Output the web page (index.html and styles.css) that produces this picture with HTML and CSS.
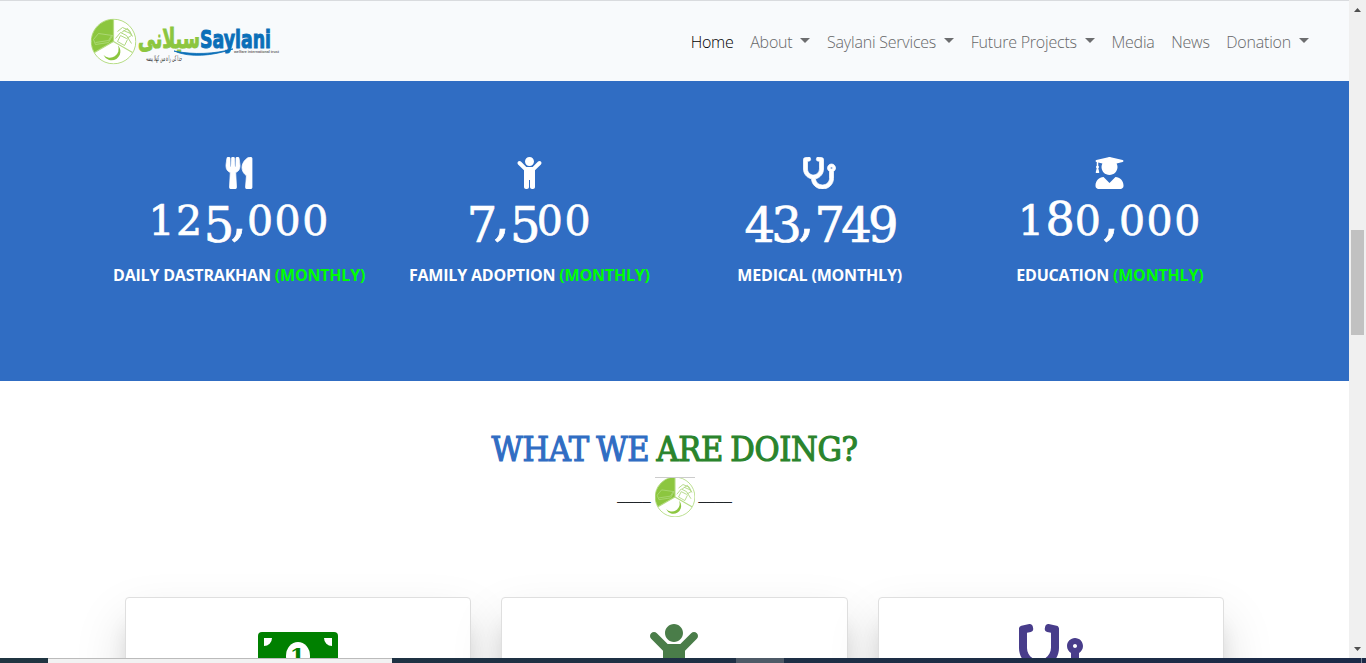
FILE: index.html
```html
<!DOCTYPE html>
<html lang="en">
<head>
<meta charset="utf-8">
<title>Saylani</title>
<link rel="stylesheet" href="styles.css">
</head>
<body>
<svg width="0" height="0" class="defs">
  <symbol id="emblem" viewBox="0 0 46 46">
    <circle cx="23" cy="23" r="22.300" fill="#fff" stroke="#b5dc84" stroke-width="1"/>
    <path d="M23 23V1A22 22 0 0 0 4 34Z" fill="#8cc63f"/>
    <path d="M23 1V23L4 34M23 23L42 34" fill="none" stroke="#b5dc84" stroke-width="1.200"/>
    <path d="M3 21L8 15L22 17L18 24L5 26Z M5 24L18 22L21 17" fill="none" stroke="#b2dc80" stroke-width=".8"/>
    <path d="M25 20L30 14L36 17L41 25M27 13L32 9L39 12L42 18M31 14L37 10L41 17L36 20L30 17L27 23L34 27L37 21M33 12L40 15" fill="none" stroke="#b0d881" stroke-width="1"/>
    <path d="M27.500 27A8.800 8.800 0 1 1 13 36.500A8.800 8.800 0 0 0 27.500 27Z" fill="#8cc63f"/>
  </symbol>
  <symbol id="utensils" viewBox="0 0 416 512"><path d="M207.900 15.200c.8 4.700 16.100 94.500 16.100 128.800 0 52.300-27.800 89.600-68.900 104.600L168 486.700c.7 13.700-10.200 25.300-24 25.300H80c-13.700 0-24.700-11.500-24-25.300l12.900-238.100C27.700 233.600 0 196.200 0 144 0 109.600 15.300 19.900 16.100 15.200 19.300-5.100 61.400-5.400 64 16.300v141.200c1.300 3.400 15.100 3.200 16 0 1.400-25.300 7.900-139.200 8-141.800 3.300-20.800 44.700-20.800 47.900 0 .2 2.700 6.600 116.500 8 141.800.9 3.200 14.800 3.400 16 0V16.300c2.600-21.600 44.800-21.400 47.900-1.100zm119.200 285.700l-15 185.100c-1.200 14 9.900 26 23.900 26h56c13.300 0 24-10.700 24-24V24c0-13.200-10.700-24-24-24-82.500 0-221.400 178.500-64.900 300.900z"/></symbol>
  <symbol id="child" viewBox="0 0 384 512"><path d="M120 72c0-39.765 32.235-72 72-72s72 32.235 72 72c0 39.764-32.235 72-72 72s-72-32.236-72-72zm254.627 1.373c-12.496-12.497-32.758-12.497-45.254 0L242.745 160H141.254L54.627 73.373c-12.496-12.497-32.758-12.497-45.254 0-12.497 12.497-12.497 32.758 0 45.255L104 213.254V480c0 17.673 14.327 32 32 32h16c17.673 0 32-14.327 32-32V368h16v112c0 17.673 14.327 32 32 32h16c17.673 0 32-14.327 32-32V213.254l94.627-94.627c12.497-12.497 12.497-32.757 0-45.254z"/></symbol>
  <symbol id="stethoscope" viewBox="0 0 512 512"><path d="M447.100 112c-34.200.5-62.300 28.400-63 62.600-.5 24.300 12.500 45.600 32 56.800V344c0 57.300-50.200 104-112 104-60 0-109.200-44.100-111.900-99.200C265 333.800 320 269.200 320 192V36.600c0-11.400-8.100-21.300-19.300-23.500L237.800.5c-13-2.600-25.600 5.800-28.200 18.800L206.400 35c-2.600 13 5.800 25.600 18.800 28.200l30.700 6.100v121.400c0 52.900-42.200 96.700-95.100 97.200-53.400.5-96.900-42.700-96.900-96V69.400l30.700-6.100c13-2.600 21.400-15.200 18.800-28.200l-3.100-15.700C107.700 6.400 95.100-2 82.100.6L19.300 13C8.100 15.300 0 25.100 0 36.600V192c0 77.300 55.100 142 128.100 156.800C130.700 439.200 208.600 512 304 512c97 0 176-75.400 176-168V231.400c19.100-11.100 32-31.700 32-55.400 0-35.700-29.200-64.500-64.900-64zm.9 80c-8.800 0-16-7.200-16-16s7.200-16 16-16 16 7.200 16 16-7.200 16-16 16z"/></symbol>
  <symbol id="graduate" viewBox="0 0 448 512"><path d="M319.400 320.600L224 416l-95.400-95.400C57.100 323.700 0 382.200 0 454.400v9.600c0 26.500 21.500 48 48 48h352c26.500 0 48-21.500 48-48v-9.600c0-72.200-57.100-130.700-128.600-133.800zM13.600 79.800l6.400 1.500v58.400c-7 4.200-12 11.500-12 20.300 0 8.400 4.600 15.400 11.100 19.700L3.500 242c-1.700 6.900 2.100 14 7.600 14h41.800c5.500 0 9.300-7.100 7.600-14l-15.600-62.300C51.400 175.400 56 168.400 56 160c0-8.800-5-16.100-12-20.300V87.100l66 15.900c-8.600 17.200-14 36.400-14 57 0 70.700 57.300 128 128 128s128-57.300 128-128c0-20.600-5.300-39.800-14-57l96.300-23.200c18.200-4.400 18.200-27.100 0-31.500l-190.400-46c-13-3.100-26.700-3.100-39.700 0L13.600 48.200c-18.100 4.400-18.100 27.200 0 31.600z"/></symbol>
</svg>
<div class="browser">
  <div class="viewport">
    <div class="page">
      <header class="navbar">
        <svg class="brand" width="192" height="50" viewBox="89 16 192 50" role="img" aria-label="Saylani">
          <use href="#emblem" x="90.500" y="18.500" width="46" height="46"/>
          <text class="brand-ar" x="200" y="48" textLength="62" lengthAdjust="spacingAndGlyphs">سيلانى</text>
          <path d="M174 51C190 58 212 56 233 49C214 54 194 55 174 51Z" fill="#0b6fb8" stroke="#0b6fb8" stroke-width=".8"/>
          <text class="brand-en" x="200" y="48" textLength="71" lengthAdjust="spacingAndGlyphs">Saylani</text>
          <text class="brand-sub" x="234" y="52.500" textLength="45" lengthAdjust="spacingAndGlyphs">welfare international trust</text>
          <text class="brand-urdu" x="182" y="61" textLength="36" lengthAdjust="spacingAndGlyphs">خدا کی راہ میں کھلا پیسہ</text>
        </svg>
        <nav class="links">
          <a class="link active">Home</a>
          <a class="link drop">About</a>
          <a class="link drop">Saylani Services</a>
          <a class="link drop">Future Projects</a>
          <a class="link">Media</a>
          <a class="link">News</a>
          <a class="link drop">Donation</a>
        </nav>
      </header>
      <section class="stats">
        <div class="stat">
          <svg class="stat-icon heavy" width="28" height="32"><use href="#utensils"/></svg>
          <p class="count">12<span class="low">5</span><span class="comma">,</span>000</p>
          <p class="label">DAILY DASTRAKHAN <span class="lime">(MONTHLY)</span></p>
        </div>
        <div class="stat">
          <svg class="stat-icon" width="25" height="32"><use href="#child"/></svg>
          <p class="count"><span class="low">7</span><span class="comma">,</span><span class="low">5</span>00</p>
          <p class="label">FAMILY ADOPTION <span class="lime">(MONTHLY)</span></p>
        </div>
        <div class="stat">
          <svg class="stat-icon heavy" width="33" height="32"><use href="#stethoscope"/></svg>
          <p class="count"><span class="low">43</span><span class="comma">,</span><span class="low">749</span></p>
          <p class="label">MEDICAL (MONTHLY)</p>
        </div>
        <div class="stat">
          <svg class="stat-icon" width="29" height="32"><use href="#graduate"/></svg>
          <p class="count">1<span class="high">8</span>0<span class="comma">,</span>000</p>
          <p class="label">EDUCATION <span class="lime">(MONTHLY)</span></p>
        </div>
      </section>
      <section class="work">
        <h2 class="title">WHAT WE <span class="green">ARE DOING?</span></h2>
        <div class="divider"><span>____</span><svg width="40" height="40" viewBox="0 0 40 40"><use href="#emblem" x="-.5" y="-.5" width="41" height="41"/><path d="M0 .5H40" stroke="#ccc"/></svg><span>____</span></div>
        <div class="cards">
          <article class="card">
            <svg width="80" height="64" viewBox="0 0 640 512">
              <rect y="64" width="640" height="384" rx="32" fill="#008000"/>
              <path d="M48 112h64a64 64 0 0 1-64 64zM592 112h-64a64 64 0 0 0 64 64z" fill="#fff"/>
              <ellipse cx="320" cy="256" rx="96" ry="112" fill="#fff"/>
              <text class="bill-one" x="316" y="322" text-anchor="middle">1</text>
            </svg>
          </article>
          <article class="card"><svg class="moss" width="48" height="64"><use href="#child"/></svg></article>
          <article class="card"><svg class="violet" width="64" height="64"><use href="#stethoscope"/></svg></article>
        </div>
      </section>
    </div>
    <div class="scrollbar">
      <svg width="17" height="17"><path d="M5 12L8.500 8L12 12Z" fill="#505050"/></svg>
      <div class="thumb"></div>
      <svg class="down" width="17" height="17"><path d="M5 6L8.500 10L12 6Z" fill="#505050"/></svg>
    </div>
  </div>
  <div class="taskbar"><div class="search"></div><div class="task"></div><div class="peek"></div></div>
</div>
</body>
</html>
```
FILE: styles.css
```css
* { box-sizing: border-box; }
body { margin: 0; overflow: hidden; font-family: "Open Sans", "Noto Sans", sans-serif; font-size: 16px; color: #212529; }
p, h2 { margin: 0; }
.defs { position: absolute; }
.browser { width: 1366px; height: 663px; display: flex; flex-direction: column; overflow: hidden; }
.viewport { height: 658px; display: flex; overflow: hidden; }
.page { width: 1349px; height: 658px; overflow: hidden; background: #fff; }
.navbar { height: 81px; display: flex; align-items: center; justify-content: space-between; padding: 0 40px 0 89px; background: #f8fafc; border-top: 1px solid #d9dbde; }
.links { display: flex; gap: 16.600px; padding-top: 1px; }
.link { display: flex; align-items: center; font-weight: 300; line-height: 24px; color: #666769; letter-spacing: -.21px; white-space: nowrap; }
.link.active { color: #000; }
.drop::after { content: ""; margin-left: 8px; margin-top: -3px; border: 5px solid transparent; border-top-color: #6c6d6f; border-bottom: 0; }
.brand { overflow: visible; }
.brand-ar { font: bold 27px "DejaVu Sans", sans-serif; fill: #8cc63f; stroke: #8cc63f; stroke-width: 1px; direction: rtl; }
.brand-en { font: bold 25px "DejaVu Sans", sans-serif; fill: #0b6fb8; stroke: #0b6fb8; stroke-width: 1px; }
.brand-sub { font: bold 4px "Liberation Sans", sans-serif; fill: #666; }
.brand-urdu { font: 8px "DejaVu Sans", sans-serif; fill: #333; direction: rtl; }
.stats { height: 300px; padding: 76px 94px 0; display: grid; grid-template-columns: repeat(4, 1fr); background: #306dc3; color: #fff; }
.stat { display: flex; flex-direction: column; align-items: center; }
.stat-icon { fill: #fff; }
.heavy { stroke: #fff; stroke-width: 12px; }
.count { height: 74px; line-height: 64px; font-family: "DejaVu Serif", serif; font-size: 41px; letter-spacing: 1.500px; white-space: nowrap; -webkit-text-stroke: .7px; }
.low { font-size: 48px; line-height: 1px; vertical-align: -6.500px; letter-spacing: -3.800px; }
.high { font-size: 46px; line-height: 1px; letter-spacing: 0; }
.comma { font-size: 52px; line-height: 1px; letter-spacing: 0; }
.label { font-weight: 700; line-height: 24px; letter-spacing: -.19px; white-space: nowrap; }
.lime { color: #0f0; }
.work { padding-top: 48px; display: flex; flex-direction: column; align-items: center; }
.title { font-family: "DejaVu Serif Condensed", "DejaVu Serif", serif; font-weight: 400; font-size: 34px; line-height: 40px; letter-spacing: -.350px; word-spacing: -2px; color: #306dc3; -webkit-text-stroke: 1.100px; white-space: nowrap; }
.green { color: #2a842c; }
.divider { height: 40px; margin-top: 8px; display: flex; gap: 4px; font-family: "Liberation Sans", sans-serif; font-size: 15px; line-height: 36px; }
.cards { width: 1099px; margin-top: 80px; display: grid; grid-template-columns: repeat(3, 1fr); gap: 30px; }
.card { height: 300px; padding-top: 26px; display: flex; justify-content: center; align-items: flex-start; background: #fff; border: 1px solid #dfdfdf; border-radius: 4px; box-shadow: 0 24px 52px rgba(0,0,0,.13), 0 26px 20px -4px rgba(0,0,0,.12); }
.bill-one { font: bold 180px "DejaVu Serif", serif; fill: #008000; }
.moss { fill: #4a7d49; }
.violet { fill: #483d8b; }
.scrollbar { width: 17px; height: 658px; display: flex; flex-direction: column; align-items: center; background: #f0f0f0; }
.scrollbar svg { flex: none; }
.thumb { width: 13px; height: 105px; margin-top: 213px; background: #c1c1c1; }
.down { margin-top: auto; }
.taskbar { height: 5px; display: flex; background: linear-gradient(90deg, #203541, #1b2a48); }
.search { width: 344px; margin-left: 48px; background: #f2f2f2; border-top: 1px solid #bbb; }
.task { width: 48px; margin-left: 344px; background: #4e5a67; }
.peek { width: 1px; margin-left: 577px; background: #7b8799; }
```
